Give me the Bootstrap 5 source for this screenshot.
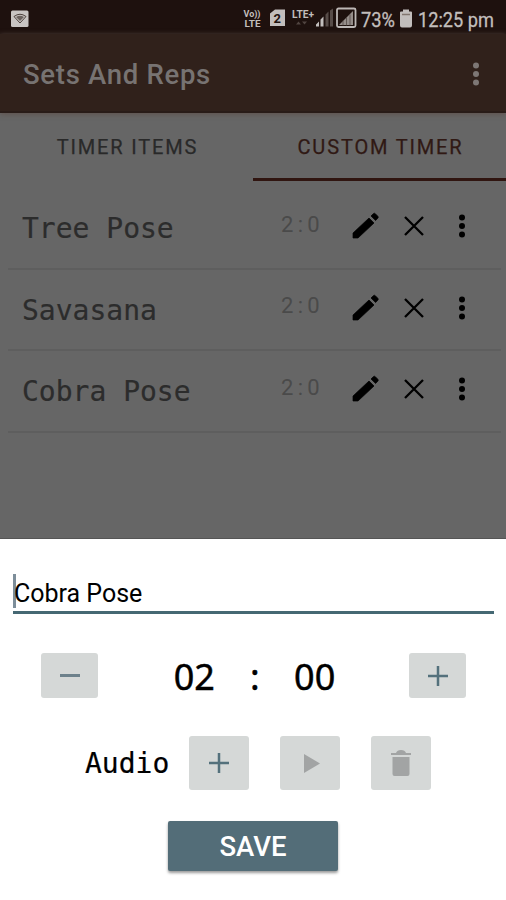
<!DOCTYPE html>
<html lang="en">
<head>
<meta charset="utf-8">
<meta name="viewport" content="width=device-width, initial-scale=1">
<title>Sets And Reps</title>
<link href="https://cdn.jsdelivr.net/npm/bootstrap@5.3.0/dist/css/bootstrap.min.css" rel="stylesheet">
<style>
body{font-family:Roboto,"Liberation Sans",sans-serif;background:#666;height:900px;overflow:hidden;color:#000}
svg{display:block;flex:none}
.screen{height:900px}
.status{height:34px;background:#1e110e;color:#bdb8b6;padding:3px 11px 0 11px}
.appbar{height:79px;background:#30211b;border-bottom:2px solid #291c18;box-shadow:0 1px 5px #5f504b;padding:3px 27px 0 23px;z-index:1}
.appbar h1{font-size:27.5px;letter-spacing:.7px;color:#777372;padding-top:1px}
.tabs{height:68px}
.tab-label{font-size:20px;letter-spacing:1.85px;color:#292929;border-bottom:3px solid transparent;padding-top:3px;-webkit-text-stroke:.25px}
.tab-label span{margin-right:-2px}
.tab-label.current{color:#301914;border-color:#301510}
.entries{padding:7px 5px 0 8px}
.entry{height:81.5px;border-bottom:2px solid #5e5e5e;padding-left:14px}
.mono{font-family:"DejaVu Sans Mono","Liberation Mono",monospace;font-size:28px;white-space:pre;-webkit-text-stroke:.2px}
.entry .mono{color:#2c2c2c;width:259px;padding-top:3px}
.duration{font-size:22px;letter-spacing:4.3px;color:#4a4a4a;width:71px;margin-top:-7px}
.actions{margin-top:-3px}
.more{margin-left:35px}
.sheet{height:362px;background:#fff;border-top:1px solid #555;padding:0 12px}
.name-field{height:75px;border-bottom:3px solid #456873;font-size:25px;padding:37px 0 0 1px;margin-left:1px;line-height:36px}
.cursor{left:0;top:35px;width:3px;height:34px;background:#7d8e9a}
.stepper{height:45px;margin-top:39px;padding:0 28px 0 29px}
.tile{width:57px;height:45px;background:#d5d8d7;border-radius:3px;border:0;padding:0}
.digits{font-family:"Noto Sans",sans-serif;font-size:36px;line-height:47px;height:45px;white-space:nowrap;-webkit-text-stroke:.5px;padding-left:2px}
.colon{margin:0 34.5px 0 35px}
.audio{margin-top:38px;padding-left:73px}
.audio .mono{padding-top:2px}
.audio .tile{width:60px;height:54px;margin-left:31px}
.audio .tile:nth-of-type(1){margin-left:20px}
.play{margin-left:3px}
.save{width:170px;height:50px;margin-top:31px;background:#536d78;color:#fff;border:0;border-radius:2px;font-size:27.500px;font-weight:500;box-shadow:0 2px 3px #0006;line-height:50px;padding:1px 0 0}
</style>
<script src="https://cdn.jsdelivr.net/npm/bootstrap@5.3.0/dist/js/bootstrap.bundle.min.js"></script>
</head>
<body>
<svg width="0" height="0" class="position-absolute">
<defs>
<symbol id="pencil" viewBox="0 0 28 28"><path d="M1 21 17 6l5 5L6 26H1zM19 4l2.300-2.300q1-1 2 0l2.500 2.500q1 1 0 2L23.600 8.500z" stroke="#000" stroke-width=".7"/></symbol>
<symbol id="cross" viewBox="0 0 20 20"><path d="M1 1 19 19M19 1 1 19" fill="none" stroke="currentColor" stroke-width="2.300"/></symbol>
<symbol id="dots" viewBox="0 0 6 24"><circle cx="3" cy="3.500" r="3"/><circle cx="3" cy="12" r="3"/><circle cx="3" cy="20.500" r="3"/></symbol>
<symbol id="plus" viewBox="0 0 20 20"><path d="M0 10h20M10 0v20" fill="none" stroke="#54717c" stroke-width="2.500"/></symbol>
</defs>
</svg>
<div class="screen d-flex flex-column">
<header class="status d-flex align-items-center justify-content-between">
<svg width="18" height="18" viewBox="0 0 18 18"><rect y=".5" width="17.500" height="16.500" rx="1.500" fill="#c8c4c2"/><path d="M3 6.500q6-4.500 12 0L9 13z" fill="none" stroke="#4c403b"/><path d="M5 7q4-2.500 8 0L9 11z" fill="#6b625e"/></svg>
<svg width="252" height="30" viewBox="243 3.500 252 30" fill="#c2bebc" font-family="Roboto,sans-serif">
<g font-weight="700"><text x="243.500" y="16" font-size="9" textLength="17" lengthAdjust="spacingAndGlyphs">Vo))</text><text x="244.500" y="26.500" font-size="9" textLength="16" lengthAdjust="spacingAndGlyphs">LTE</text>
<path d="M275 9h10v16.500h-15V13z"/><text x="273.500" y="22" font-size="13" fill="#1e110e">2</text>
<text x="292" y="17" font-size="10" textLength="22" lengthAdjust="spacingAndGlyphs">LTE+</text></g>
<path d="m296 24 2.500-3 2.500 3zM302 21h5l-2.500 3z" fill="#514541"/>
<path d="M316 26v-2l3-3v5zM320.500 26v-7l3-3v10z"/><path d="M325.500 26V14l3-3v15zM330 26V10l3-2v18z" fill="#574c48"/>
<rect x="337" y="8" width="18.500" height="18.500" rx="1.500" fill="none" stroke="#bdb8b6" stroke-width="1.800"/><path d="M339 24.500 353 10.500v14z" fill="#958d89"/><path d="M343 20v5M346.500 17v8M350 14v11" stroke="#4b403c" stroke-width=".7"/>
<g stroke="#c2bebc" stroke-width=".3"><text x="361" y="26" font-size="21" textLength="34" lengthAdjust="spacingAndGlyphs">73%</text>
<text x="418" y="26" font-size="21" textLength="76" lengthAdjust="spacingAndGlyphs">12:25 pm</text></g>
<path d="M403 9h6v2h2q1 0 1 1v13q0 2-2 2h-8q-2 0-2-2V12q0-1 1-1h2z"/><path d="M402 14h8" stroke="#82766f" stroke-width="1.500"/>
</svg>
</header>
<nav class="appbar d-flex align-items-center justify-content-between position-relative">
<h1 class="mb-0 fw-medium">Sets And Reps</h1>
<svg width="6" height="24" fill="#7d7775"><use href="#dots"/></svg>
</nav>
<div class="tabs row g-0 text-center">
<div class="col-6 tab-label d-flex align-items-center justify-content-center"><span>TIMER ITEMS</span></div>
<div class="col-6 tab-label current d-flex align-items-center justify-content-center"><span>CUSTOM TIMER</span></div>
</div>
<main class="entries flex-grow-1">
<div class="entry d-flex align-items-center"><span class="mono">Tree Pose</span><span class="duration">2:0</span><div class="actions d-flex align-items-center"><svg width="28" height="28"><use href="#pencil"/></svg><svg class="ms-4" width="20" height="20"><use href="#cross"/></svg><svg class="more" width="6" height="24"><use href="#dots"/></svg></div></div>
<div class="entry d-flex align-items-center"><span class="mono">Savasana</span><span class="duration">2:0</span><div class="actions d-flex align-items-center"><svg width="28" height="28"><use href="#pencil"/></svg><svg class="ms-4" width="20" height="20"><use href="#cross"/></svg><svg class="more" width="6" height="24"><use href="#dots"/></svg></div></div>
<div class="entry d-flex align-items-center"><span class="mono">Cobra Pose</span><span class="duration">2:0</span><div class="actions d-flex align-items-center"><svg width="28" height="28"><use href="#pencil"/></svg><svg class="ms-4" width="20" height="20"><use href="#cross"/></svg><svg class="more" width="6" height="24"><use href="#dots"/></svg></div></div>
</main>
<section class="sheet">
<div class="name-field position-relative"><span class="cursor position-absolute"></span><span class="position-relative">Cobra Pose</span></div>
<div class="stepper d-flex justify-content-between">
<button class="tile d-flex align-items-center justify-content-center" aria-label="Decrease"><svg width="20" height="3"><path d="M0 1.500h20" stroke="#6d818b" stroke-width="3"/></svg></button>
<div class="digits d-flex"><span>02</span><span class="colon">:</span><span>00</span></div>
<button class="tile d-flex align-items-center justify-content-center" aria-label="Increase"><svg width="20" height="20"><use href="#plus"/></svg></button>
</div>
<div class="audio d-flex align-items-center">
<span class="mono">Audio</span>
<button class="tile d-flex align-items-center justify-content-center" aria-label="Add audio"><svg width="20" height="20"><use href="#plus"/></svg></button>
<button class="tile d-flex align-items-center justify-content-center" aria-label="Play"><svg class="play" width="16" height="19"><path d="M0 0 16 9.500 0 19z" fill="#a2a4a4"/></svg></button>
<button class="tile d-flex align-items-center justify-content-center" aria-label="Delete"><svg width="20" height="26" viewBox="0 0 20 26"><path d="M0 3h5q1-3 5-3t5 3h5v2H0zM1.500 7h17v17q0 2-2 2h-13q-2 0-2-2z" fill="#a2a4a4"/></svg></button>
</div>
<button class="save d-block mx-auto">SAVE</button>
</section>
</div>
</body>
</html>
